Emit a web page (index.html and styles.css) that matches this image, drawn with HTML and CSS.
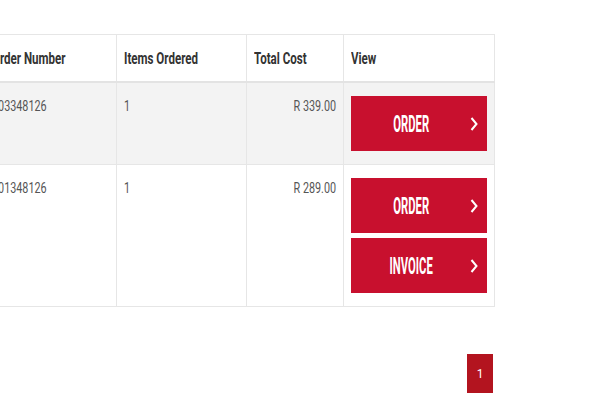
FILE: index.html
```html
<!DOCTYPE html>
<html lang="en">
<head>
  <meta charset="UTF-8" />
  <title>Order History</title>
  <link rel="stylesheet" href="styles.css">
</head>
<body>
  <div class="orders">
    <table class="order-table">
      <thead>
        <tr>
          <th class="col-number"><span class="txt">Order Number</span></th>
          <th class="col-items"><span class="txt">Items Ordered</span></th>
          <th class="col-cost"><span class="txt">Total Cost</span></th>
          <th class="col-view"><span class="txt">View</span></th>
        </tr>
      </thead>
      <tbody>
        <tr class="alt">
          <td><span class="txt">103348126</span></td>
          <td><span class="txt">1</span></td>
          <td class="cost"><span class="txt">R 339.00</span></td>
          <td class="view">
            <a class="btn" href="#"><span class="label">ORDER</span>
              <svg class="chev" width="8" height="14" viewBox="0 0 8 14"><polyline points="1.5,1 6.5,7 1.5,13" fill="none" stroke="#fff" stroke-width="2"/></svg>
            </a>
          </td>
        </tr>
        <tr>
          <td><span class="txt">101348126</span></td>
          <td><span class="txt">1</span></td>
          <td class="cost"><span class="txt">R 289.00</span></td>
          <td class="view">
            <a class="btn" href="#"><span class="label">ORDER</span>
              <svg class="chev" width="8" height="14" viewBox="0 0 8 14"><polyline points="1.5,1 6.5,7 1.5,13" fill="none" stroke="#fff" stroke-width="2"/></svg>
            </a>
            <a class="btn" href="#"><span class="label">INVOICE</span>
              <svg class="chev" width="8" height="14" viewBox="0 0 8 14"><polyline points="1.5,1 6.5,7 1.5,13" fill="none" stroke="#fff" stroke-width="2"/></svg>
            </a>
          </td>
        </tr>
      </tbody>
    </table>

    <div class="pager">
      <span class="page current">1</span>
    </div>
  </div>
</body>
</html>
```

FILE: styles.css
```css
body {
  margin: 0;
  background: #fff;
  color: #444;
  font-family: Roboto, "DejaVu Sans", sans-serif;
}

.orders {
  padding-top: 34px;
  margin-left: -16px;
  width: 510px;
}

.order-table {
  border-collapse: collapse;
  table-layout: fixed;
  width: 510px;
}

.col-number { width: 117px; }
.col-items { width: 115px; }
.col-cost { width: 82px; }
.col-view { width: 136px; }

/* condensed look: the site font is a narrow DIN, squeeze a regular sans */
.txt {
  display: inline-block;
  white-space: nowrap;
  transform: scaleX(0.68);
  transform-origin: left center;
}

.order-table th {
  text-align: left;
  font-size: 17px;
  font-weight: bold;
  height: 46px;
  padding: 0 7px;
  border: 1px solid #e6e6e6;
  border-bottom: 2px solid #e3e3e3;
  color: #333;
}

.order-table td {
  vertical-align: top;
  font-size: 15px;
  padding: 14px 7px 13px;
  line-height: 18px;
  border: 1px solid #e6e6e6;
  color: #555;
}

.order-table td .txt { transform: scaleX(0.72); }

.order-table tr.alt td { background: #f3f3f3; }

.order-table td.cost { text-align: right; }
.order-table td.cost .txt { transform-origin: right center; }

.order-table td.view { padding: 13px 7px; }

.btn {
  display: flex;
  align-items: center;
  justify-content: center;
  position: relative;
  height: 55px;
  background: #c8102e;
  color: #fff;
  text-decoration: none;
  font-weight: bold;
  font-size: 24px;
  padding-right: 16px;
}

.btn .label {
  display: inline-block;
  transform: scaleX(0.47);
}

.btn + .btn { margin-top: 5px; }

.chev {
  position: absolute;
  right: 9px;
  top: 21px;
}

.pager {
  display: flex;
  justify-content: flex-end;
  padding: 47px 1px 0 0;
}

.page {
  display: flex;
  align-items: center;
  justify-content: center;
  width: 26px;
  height: 39px;
  font-size: 12px;
}

.page.current {
  background: #b3141f;
  color: #fff;
}
```
